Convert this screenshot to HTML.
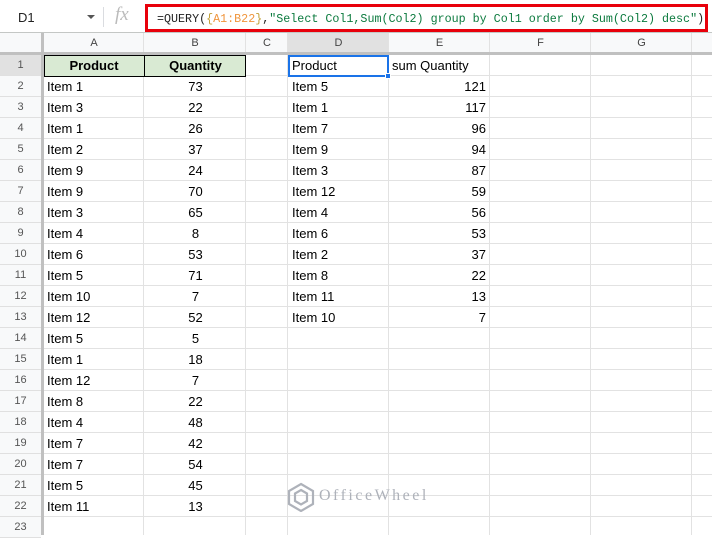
<!DOCTYPE html>
<html><head><meta charset="utf-8"><style>
*{margin:0;padding:0;box-sizing:border-box}
body{width:712px;height:535px;overflow:hidden;background:#fff;font-family:"Liberation Sans",Arial,sans-serif;font-size:13px;color:#000;position:relative}
.abs{position:absolute}
#fb{left:0;top:0;width:712px;height:33px;background:#fff;border-bottom:1px solid #c4c7c5}
#grid{left:44px;top:55px;width:668px;height:480px;
background-image:
linear-gradient(to bottom,transparent 20px,#e2e2e2 20px,#e2e2e2 21px);
background-size:100% 21px}
.v{position:absolute;top:33px;width:1px;height:502px;background:#e2e2e2}
.hdr{left:0;top:33px;width:712px;height:22px;background:#f8f9fa;border-bottom:1px solid #c0c0c0}
.ch{position:absolute;top:33px;height:21px;line-height:21px;text-align:center;color:#444;font-size:11px}
.rh{position:absolute;left:0;width:41px;height:21px;line-height:21px;text-align:center;color:#555;font-size:11px;background:#f8f9fa;border-bottom:1px solid #e0e0e0}
.t{position:absolute;height:21px;line-height:20px;white-space:nowrap}
</style></head><body>
<div class="abs" id="fb">
  <div class="abs" style="left:18px;top:10px;font-size:13px;color:#222">D1</div>
  <div class="abs" style="left:87px;top:15px;width:0;height:0;border-left:4px solid transparent;border-right:4px solid transparent;border-top:4px solid #555"></div>
  <div class="abs" style="left:103px;top:7px;width:1px;height:20px;background:#dadce0"></div>
  <div class="abs" style="left:115px;top:4px;font-family:'Liberation Serif',serif;font-style:italic;font-size:19px;color:#bbb">fx</div>
  <div class="abs" style="left:145px;top:4px;width:563px;height:28px;border:3px solid #e8000b"></div>
  <div class="abs" style="left:157px;top:12px;font-family:'Liberation Mono',monospace;font-size:11.7px;color:#222;white-space:nowrap">=QUERY(<span style="color:#c2a13a">{</span><span style="color:#f0953c">A1:B22</span><span style="color:#c2a13a">}</span>,<span style="color:#0b7a3e">"Select Col1,Sum(Col2) group by Col1 order by Sum(Col2) desc"</span>)</div>
</div>
<div class="abs hdr"></div>
<div class="abs" style="left:288px;top:33px;width:101px;height:22px;background:#e1e1e1"></div>
<div class="abs" id="grid"></div>
<div class="v" style="left:143px"></div><div class="v" style="left:245px"></div><div class="v" style="left:287px"></div><div class="v" style="left:388px"></div><div class="v" style="left:489px"></div><div class="v" style="left:590px"></div><div class="v" style="left:691px"></div>
<div class="abs" style="left:0;top:33px;width:41px;height:502px;background:#f8f9fa"></div>
<div class="abs" style="left:41px;top:33px;width:3px;height:502px;background:#c0c0c0"></div>
<div class="abs" style="left:0;top:52px;width:712px;height:3px;background:#c0c0c0"></div>
<div class="ch" style="left:44px;width:100px">A</div>
<div class="ch" style="left:144px;width:102px">B</div>
<div class="ch" style="left:246px;width:42px">C</div>
<div class="ch" style="left:288px;width:101px">D</div>
<div class="ch" style="left:389px;width:101px">E</div>
<div class="ch" style="left:490px;width:101px">F</div>
<div class="ch" style="left:591px;width:101px">G</div>
<div class="rh" style="top:55px;background:#e1e1e1">1</div><div class="rh" style="top:76px">2</div><div class="rh" style="top:97px">3</div><div class="rh" style="top:118px">4</div><div class="rh" style="top:139px">5</div><div class="rh" style="top:160px">6</div><div class="rh" style="top:181px">7</div><div class="rh" style="top:202px">8</div><div class="rh" style="top:223px">9</div><div class="rh" style="top:244px">10</div><div class="rh" style="top:265px">11</div><div class="rh" style="top:286px">12</div><div class="rh" style="top:307px">13</div><div class="rh" style="top:328px">14</div><div class="rh" style="top:349px">15</div><div class="rh" style="top:370px">16</div><div class="rh" style="top:391px">17</div><div class="rh" style="top:412px">18</div><div class="rh" style="top:433px">19</div><div class="rh" style="top:454px">20</div><div class="rh" style="top:475px">21</div><div class="rh" style="top:496px">22</div><div class="rh" style="top:517px">23</div>
<div class="abs" style="left:44px;top:55px;width:202px;height:22px;background:#d9ead3;border:1px solid #000"></div>
<div class="abs" style="left:144px;top:55px;width:1px;height:22px;background:#000"></div>
<div class="t" style="left:44px;top:56px;width:100px;text-align:center;font-weight:bold">Product</div>
<div class="t" style="left:145px;top:56px;width:101px;text-align:center;font-weight:bold">Quantity</div>
<div class="abs" style="left:288px;top:55px;width:101px;height:22px;border:2px solid #1a73e8"></div>
<div class="abs" style="left:385px;top:73px;width:6px;height:6px;background:#1a73e8;border:1px solid #fff"></div>
<div class="t" style="left:292px;top:56px">Product</div>
<div class="t" style="left:392px;top:56px">sum Quantity</div>
<div class="t" style="left:47px;top:77px">Item 1</div><div class="t" style="left:145px;top:77px;width:101px;text-align:center">73</div>
<div class="t" style="left:47px;top:98px">Item 3</div><div class="t" style="left:145px;top:98px;width:101px;text-align:center">22</div>
<div class="t" style="left:47px;top:119px">Item 1</div><div class="t" style="left:145px;top:119px;width:101px;text-align:center">26</div>
<div class="t" style="left:47px;top:140px">Item 2</div><div class="t" style="left:145px;top:140px;width:101px;text-align:center">37</div>
<div class="t" style="left:47px;top:161px">Item 9</div><div class="t" style="left:145px;top:161px;width:101px;text-align:center">24</div>
<div class="t" style="left:47px;top:182px">Item 9</div><div class="t" style="left:145px;top:182px;width:101px;text-align:center">70</div>
<div class="t" style="left:47px;top:203px">Item 3</div><div class="t" style="left:145px;top:203px;width:101px;text-align:center">65</div>
<div class="t" style="left:47px;top:224px">Item 4</div><div class="t" style="left:145px;top:224px;width:101px;text-align:center">8</div>
<div class="t" style="left:47px;top:245px">Item 6</div><div class="t" style="left:145px;top:245px;width:101px;text-align:center">53</div>
<div class="t" style="left:47px;top:266px">Item 5</div><div class="t" style="left:145px;top:266px;width:101px;text-align:center">71</div>
<div class="t" style="left:47px;top:287px">Item 10</div><div class="t" style="left:145px;top:287px;width:101px;text-align:center">7</div>
<div class="t" style="left:47px;top:308px">Item 12</div><div class="t" style="left:145px;top:308px;width:101px;text-align:center">52</div>
<div class="t" style="left:47px;top:329px">Item 5</div><div class="t" style="left:145px;top:329px;width:101px;text-align:center">5</div>
<div class="t" style="left:47px;top:350px">Item 1</div><div class="t" style="left:145px;top:350px;width:101px;text-align:center">18</div>
<div class="t" style="left:47px;top:371px">Item 12</div><div class="t" style="left:145px;top:371px;width:101px;text-align:center">7</div>
<div class="t" style="left:47px;top:392px">Item 8</div><div class="t" style="left:145px;top:392px;width:101px;text-align:center">22</div>
<div class="t" style="left:47px;top:413px">Item 4</div><div class="t" style="left:145px;top:413px;width:101px;text-align:center">48</div>
<div class="t" style="left:47px;top:434px">Item 7</div><div class="t" style="left:145px;top:434px;width:101px;text-align:center">42</div>
<div class="t" style="left:47px;top:455px">Item 7</div><div class="t" style="left:145px;top:455px;width:101px;text-align:center">54</div>
<div class="t" style="left:47px;top:476px">Item 5</div><div class="t" style="left:145px;top:476px;width:101px;text-align:center">45</div>
<div class="t" style="left:47px;top:497px">Item 11</div><div class="t" style="left:145px;top:497px;width:101px;text-align:center">13</div>
<div class="t" style="left:292px;top:77px">Item 5</div><div class="t" style="left:389px;top:77px;width:97px;text-align:right">121</div>
<div class="t" style="left:292px;top:98px">Item 1</div><div class="t" style="left:389px;top:98px;width:97px;text-align:right">117</div>
<div class="t" style="left:292px;top:119px">Item 7</div><div class="t" style="left:389px;top:119px;width:97px;text-align:right">96</div>
<div class="t" style="left:292px;top:140px">Item 9</div><div class="t" style="left:389px;top:140px;width:97px;text-align:right">94</div>
<div class="t" style="left:292px;top:161px">Item 3</div><div class="t" style="left:389px;top:161px;width:97px;text-align:right">87</div>
<div class="t" style="left:292px;top:182px">Item 12</div><div class="t" style="left:389px;top:182px;width:97px;text-align:right">59</div>
<div class="t" style="left:292px;top:203px">Item 4</div><div class="t" style="left:389px;top:203px;width:97px;text-align:right">56</div>
<div class="t" style="left:292px;top:224px">Item 6</div><div class="t" style="left:389px;top:224px;width:97px;text-align:right">53</div>
<div class="t" style="left:292px;top:245px">Item 2</div><div class="t" style="left:389px;top:245px;width:97px;text-align:right">37</div>
<div class="t" style="left:292px;top:266px">Item 8</div><div class="t" style="left:389px;top:266px;width:97px;text-align:right">22</div>
<div class="t" style="left:292px;top:287px">Item 11</div><div class="t" style="left:389px;top:287px;width:97px;text-align:right">13</div>
<div class="t" style="left:292px;top:308px">Item 10</div><div class="t" style="left:389px;top:308px;width:97px;text-align:right">7</div>
<svg class="abs" style="left:286px;top:482px" width="30" height="30" viewBox="0 0 30 30"><path d="M15 2 L27 9 L27 22 L15 29 L3 22 L3 9 Z M15 8 L21 11.5 L21 19 L15 22.5 L9 19 L9 11.5 Z" fill="none" stroke="#aeb2ba" stroke-width="2.2"/></svg>
<div class="abs" style="left:319px;top:487px;font-family:'Liberation Serif',serif;font-size:16px;letter-spacing:2.5px;color:#aeb2ba">OfficeWheel</div>
</body></html>
